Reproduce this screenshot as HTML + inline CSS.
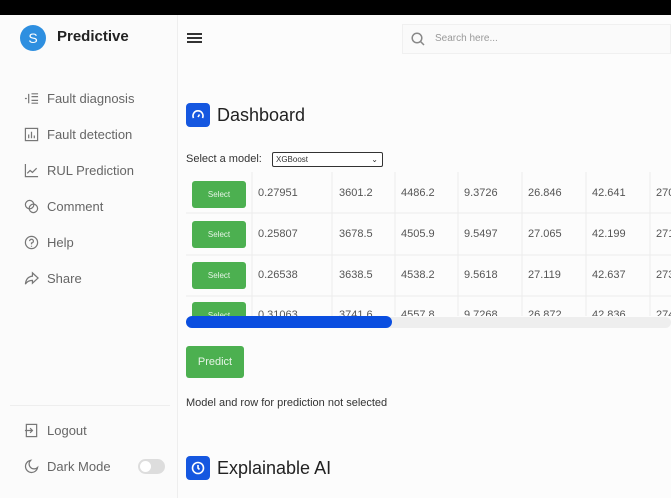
<!DOCTYPE html>
<html><head><style>
*{margin:0;padding:0;box-sizing:border-box}
body{width:671px;height:498px;overflow:hidden;background:#fcfcfc;font-family:"Liberation Sans",sans-serif;position:relative;color:#333}
.abs{position:absolute}
.top{left:0;top:0;width:671px;height:15px;background:#000}
.side{left:0;top:15px;width:178px;height:483px;background:#fbfbfb;border-right:1px solid #eee}
.nav{left:24px;font-size:13px;color:#666;display:flex;align-items:center;gap:8px}
.nav svg{width:15px;height:15px}
.sel{background:#4cb050;color:#e6f4e6;font-size:8px;text-align:center;border-radius:3px;width:54px;height:27px;line-height:27px}
.cell{font-size:11px;color:#555}
</style></head><body>
<div class="abs top"></div>
<div class="abs side"></div>
<div class="abs" style="left:20px;top:25px;width:26px;height:26px;border-radius:50%;background:#2e8fe0;color:#fff;font-size:14px;text-align:center;line-height:26px">S</div>
<div class="abs" style="left:57px;top:28px;font-size:15px;font-weight:bold;color:#222">Predictive</div>
<div class="abs nav" style="top:91px"><svg viewBox="0 0 16 16" fill="none" stroke="#777" stroke-width="1.3"><path d="M1 8h2M5 3v10M8 3h7M8 6h7M8 10h7M8 13h7"/></svg>Fault diagnosis</div>
<div class="abs nav" style="top:127px"><svg viewBox="0 0 16 16" fill="none" stroke="#777" stroke-width="1.3"><rect x="1.5" y="1.5" width="13" height="13"/><path d="M5 12V8M8 12V5M11 12V9"/></svg>Fault detection</div>
<div class="abs nav" style="top:163px"><svg viewBox="0 0 16 16" fill="none" stroke="#777" stroke-width="1.3"><path d="M1.5 1v13.5H15M3.5 11l3-3 2.5 2 4.5-4.5"/></svg>RUL Prediction</div>
<div class="abs nav" style="top:199px"><svg viewBox="0 0 16 16" fill="none" stroke="#777" stroke-width="1.3"><circle cx="6" cy="6" r="4.5"/><circle cx="10" cy="10" r="4.5"/></svg>Comment</div>
<div class="abs nav" style="top:235px"><svg viewBox="0 0 16 16" fill="none" stroke="#777" stroke-width="1.3"><circle cx="8" cy="8" r="6.5"/><path d="M6 6.5a2 2 0 1 1 2 2v1.5M8 11.5v1"/></svg>Help</div>
<div class="abs nav" style="top:271px"><svg viewBox="0 0 16 16" fill="none" stroke="#777" stroke-width="1.3"><path d="M9 2l6 5.5-6 5.5V10C5 10 3 11.5 1.5 14 2 9 4.5 6 9 5.5z"/></svg>Share</div>
<div class="abs" style="left:10px;top:405px;width:160px;border-top:1px solid #eee"></div>
<div class="abs nav" style="top:423px"><svg viewBox="0 0 16 16" fill="none" stroke="#777" stroke-width="1.3"><rect x="2.5" y="1.5" width="11" height="13"/><path d="M1 8h8M6.5 5.5 9 8l-2.5 2.5"/></svg>Logout</div>
<div class="abs nav" style="top:459px"><svg viewBox="0 0 16 16" fill="none" stroke="#777" stroke-width="1.3"><path d="M7 1.5A6.5 6.5 0 1 0 14.5 9 5 5 0 0 1 7 1.5z"/></svg>Dark Mode</div>
<div class="abs" style="left:138px;top:459px;width:27px;height:15px;border-radius:8px;background:#ddd"><div style="margin:2px;width:11px;height:11px;border-radius:50%;background:#fff"></div></div>
<div class="abs" style="left:187px;top:33px;width:15px;height:2px;background:#333;box-shadow:0 4px 0 #333,0 8px 0 #333"></div>
<div class="abs" style="left:402px;top:24px;width:269px;height:30px;background:#fafafa;border:1px solid #f0f0f0"></div>
<svg class="abs" style="left:411px;top:32px" width="14" height="14" viewBox="0 0 14 14" fill="none" stroke="#888" stroke-width="1.5"><circle cx="6" cy="6" r="4.8"/><path d="M9.5 9.5 13 13"/></svg>
<div class="abs" style="left:435px;top:33px;font-size:10px;color:#999">Search here...</div>
<div class="abs" style="left:186px;top:103px;width:24px;height:24px;border-radius:4px;background:#1557e0"><svg width="24" height="24" viewBox="0 0 24 24" fill="none" stroke="#fff" stroke-width="1.6"><path d="M7.5 15a5 5 0 1 1 9 0"/><path d="M12 14l1.5-2.5"/></svg></div>
<div class="abs" style="left:217px;top:105px;font-size:18px;color:#222">Dashboard</div>
<div class="abs" style="left:186px;top:153px;font-size:11px;color:#333">Select a model:</div>
<div class="abs" style="left:272px;top:152px;width:111px;height:15px;border:1px solid #333;border-radius:2px;background:#fff;font-size:8px;padding-left:3px;line-height:13px">XGBoost<span style="position:absolute;right:4px;top:0;font-size:8px">⌄</span></div>
<div class="abs" style="left:186px;top:172px;width:485px;height:144px;overflow:hidden">
<svg class="abs" style="left:0;top:0" width="485" height="144"><g stroke="#ececec"><path d="M66 0v144M146 0v144M209 0v144M272 0v144M336 0v144M400 0v144M464 0v144M0 41h485M0 83h485M0 124h485"/></g></svg>
<div class="abs sel" style="left:6px;top:9px">Select</div>
<div class="abs sel" style="left:6px;top:49px">Select</div>
<div class="abs sel" style="left:6px;top:90px">Select</div>
<div class="abs sel" style="left:6px;top:130px">Select</div>
<div class="abs cell" style="top:15px;left:72px">0.27951</div><div class="abs cell" style="top:15px;left:153px">3601.2</div><div class="abs cell" style="top:15px;left:215px">4486.2</div><div class="abs cell" style="top:15px;left:278px">9.3726</div><div class="abs cell" style="top:15px;left:342px">26.846</div><div class="abs cell" style="top:15px;left:406px">42.641</div><div class="abs cell" style="top:15px;left:470px">270</div>
<div class="abs cell" style="top:56px;left:72px">0.25807</div><div class="abs cell" style="top:56px;left:153px">3678.5</div><div class="abs cell" style="top:56px;left:215px">4505.9</div><div class="abs cell" style="top:56px;left:278px">9.5497</div><div class="abs cell" style="top:56px;left:342px">27.065</div><div class="abs cell" style="top:56px;left:406px">42.199</div><div class="abs cell" style="top:56px;left:470px">271</div>
<div class="abs cell" style="top:97px;left:72px">0.26538</div><div class="abs cell" style="top:97px;left:153px">3638.5</div><div class="abs cell" style="top:97px;left:215px">4538.2</div><div class="abs cell" style="top:97px;left:278px">9.5618</div><div class="abs cell" style="top:97px;left:342px">27.119</div><div class="abs cell" style="top:97px;left:406px">42.637</div><div class="abs cell" style="top:97px;left:470px">273</div>
<div class="abs cell" style="top:137px;left:72px">0.31063</div><div class="abs cell" style="top:137px;left:153px">3741.6</div><div class="abs cell" style="top:137px;left:215px">4557.8</div><div class="abs cell" style="top:137px;left:278px">9.7268</div><div class="abs cell" style="top:137px;left:342px">26.872</div><div class="abs cell" style="top:137px;left:406px">42.836</div><div class="abs cell" style="top:137px;left:470px">274</div>
</div>
<div class="abs" style="left:186px;top:317px;width:485px;height:11px;background:#eee;border-radius:6px"></div>
<div class="abs" style="left:186px;top:316px;width:206px;height:12px;background:#0a4ee0;border-radius:6px"></div>
<div class="abs" style="left:186px;top:346px;width:58px;height:32px;background:#4cb050;border-radius:3px;color:#e6f4e6;font-size:11px;text-align:center;line-height:32px">Predict</div>
<div class="abs" style="left:186px;top:397px;font-size:11px;color:#333">Model and row for prediction not selected</div>
<div class="abs" style="left:186px;top:456px;width:24px;height:24px;border-radius:4px;background:#1557e0"><svg width="24" height="24" viewBox="0 0 24 24" fill="none" stroke="#fff" stroke-width="1.6"><circle cx="12" cy="12" r="5.5"/><path d="M12 9v3l1.5 1.5"/></svg></div>
<div class="abs" style="left:217px;top:458px;font-size:18px;color:#222">Explainable AI</div>
</body></html>
